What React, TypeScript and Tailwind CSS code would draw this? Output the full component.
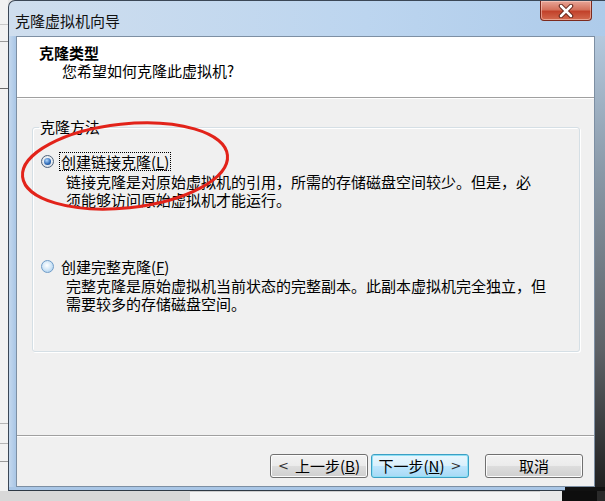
import React from "react";

function Radio({ checked }: { checked: boolean }) {
  return (
    <span
      className={
        "relative inline-flex w-[13px] h-[13px] shrink-0 items-center justify-center rounded-full border " +
        (checked
          ? "border-[#4e627a] bg-[radial-gradient(circle_at_50%_40%,#ffffff,#cfd8e2)]"
          : "border-[#6f9cc8] bg-[radial-gradient(circle_at_45%_40%,#ffffff_0%,#d6e9f8_45%,#9cc5ea_100%)]")
      }
    >
      {checked && (
        <span className="w-[7px] h-[7px] rounded-full bg-[radial-gradient(circle_at_40%_35%,#b0d8ff,#2a66b3_60%,#0f3c7a)]" />
      )}
    </span>
  );
}

function Button({ children, primary }: { children: React.ReactNode; primary?: boolean }) {
  return (
    <div
      className={
        "w-[98px] h-[24px] flex items-center justify-center rounded-[3px] border text-[15px] leading-[18px] " +
        (primary
          ? "border-[#3c9fc4] bg-[linear-gradient(to_bottom,#eaf6fd_0%,#d9f0fc_50%,#bee6fd_51%,#a7d9f5_100%)] shadow-[inset_0_0_0_1px_#8ee0f5]"
          : "border-[#707070] bg-[linear-gradient(to_bottom,#f2f2f2_0%,#ebebeb_50%,#dddddd_51%,#cfcfcf_100%)] shadow-[inset_0_0_0_1px_#fcfcfc]")
      }
    >
      {children}
    </div>
  );
}

export default function App() {
  return (
    <div className="relative w-[605px] h-[501px] overflow-hidden bg-[#e6e6e6] flex flex-col font-['Noto_Sans_CJK_SC','Noto_Sans',sans-serif] text-black">
      <div className="flex h-[491px]">
        {/* desktop strip at left */}
        <div className="w-[8px] flex flex-col bg-[#f2f2f2]">
          <div className="h-[24px]" />
          <div className="h-px bg-[#c9c9c9]" />
          <div className="h-[16px]" />
          <div className="h-px bg-[#9a9a9a]" />
          <div className="h-[46px]" />
          <div className="h-px bg-[#6a6a6a]" />
          <div className="h-[334px]" />
          <div className="h-px bg-[#b5b5b5]" />
          <div className="h-[19px]" />
          <div className="h-px bg-[#b5b5b5]" />
          <div className="h-[17px]" />
          <div className="h-px bg-[#9a9a9a]" />
        </div>

        {/* window */}
        <div className="flex-1 flex flex-col rounded-tl-[7px] border-l border-t border-[#3b4756] bg-[linear-gradient(to_right,#cfdeee,#bcd5ef_60%,#aecbea)]">
          {/* title bar */}
          <div className="h-[35px] flex items-start">
            <div className="pl-[6px] mt-[11px] text-[15px] leading-[18px] text-[#111]">克隆虚拟机向导</div>
            <div className="ml-auto mr-[13px] w-[52px] h-[20px] rounded-b-[4px] border border-t-0 border-[#7c2a1e] bg-[linear-gradient(to_bottom,#e8a597_0%,#d4725d_45%,#c2422b_55%,#d36a4f_100%)] shadow-[inset_0_0_0_1px_rgba(255,220,210,0.5)] flex items-center justify-center">
              <svg width="16" height="14" viewBox="0 0 16 14">
                <path d="M3 2 L13 12 M13 2 L3 12" stroke="#5a1d12" strokeWidth="4.5" strokeLinecap="round" />
                <path d="M3 2 L13 12 M13 2 L3 12" stroke="#ffffff" strokeWidth="2.6" strokeLinecap="round" />
              </svg>
            </div>
          </div>

          <div className="flex flex-1">
            <div className="w-[7px] bg-[linear-gradient(to_right,#c4d8ee,#a9c6e6)]" />

            {/* client */}
            <div className="w-[579px] flex flex-col border border-[#7d8fa3] bg-[#f0f0f0]">
              {/* header */}
              <div className="h-[61px] shrink-0 bg-white border-b border-[#a0a0a0] pt-[7px]">
                <div className="pl-[22px] text-[15px] leading-[18px] font-bold">克隆类型</div>
                <div className="pl-[45px] text-[15px] leading-[18px]">您希望如何克隆此虚拟机?</div>
              </div>

              {/* body */}
              <div className="flex-1 border-t border-white">
                <fieldset className="ml-[15px] mt-[19px] w-[548px] border border-[#d5dfe5] rounded-[3px] shadow-[1px_1px_0_#ffffff,inset_1px_1px_0_#ffffff] pb-[38px]">
                  <legend className="ml-[6px] px-[1px] text-[15px] leading-[18px]">克隆方法</legend>
                  <div className="flex items-center h-[20px] mt-[15px] pl-[8px]">
                    <Radio checked />
                    <span className="ml-[5px] px-[1px] border border-dotted border-black text-[15px] leading-[17px]">
                      创建链接克隆(<span className="underline">L</span>)
                    </span>
                  </div>
                  <div className="pl-[33px] mt-[2px] text-[15px] leading-[18px]">
                    <div>链接克隆是对原始虚拟机的引用，所需的存储磁盘空间较少。但是，必</div>
                    <div>须能够访问原始虚拟机才能运行。</div>
                  </div>
                  <div className="flex items-center h-[20px] mt-[47px] pl-[8px]">
                    <Radio checked={false} />
                    <span className="ml-[5px] px-[1px] border border-transparent text-[15px] leading-[17px]">
                      创建完整克隆(<span className="underline">F</span>)
                    </span>
                  </div>
                  <div className="pl-[33px] mt-[1px] text-[15px] leading-[18px]">
                    <div>完整克隆是原始虚拟机当前状态的完整副本。此副本虚拟机完全独立，但</div>
                    <div>需要较多的存储磁盘空间。</div>
                  </div>
                </fieldset>
              </div>

              {/* footer */}
              <div className="h-[51px] shrink-0 border-t border-[#a0a0a0] shadow-[inset_0_1px_0_#ffffff] flex items-start justify-end pt-[18px] pr-[11px]">
                <div className="flex">
                  <Button>
                    <span className="mr-[6px] font-['DejaVu_Sans',sans-serif] text-[13px] text-[#333]">&lt;</span>
                    上一步(<span className="underline">B</span>)
                  </Button>
                  <div className="w-[3px]" />
                  <Button primary>
                    下一步(<span className="underline">N</span>)
                    <span className="ml-[6px] font-['DejaVu_Sans',sans-serif] text-[13px] text-[#333]">&gt;</span>
                  </Button>
                  <div className="w-[16px]" />
                  <Button>取消</Button>
                </div>
              </div>
            </div>

            {/* right frame */}
            <div className="flex-1 bg-[linear-gradient(to_bottom,#b4c9de_0%,#8a99a8_30%,#5d6166_70%,#202020_100%)]" />
          </div>

          {/* bottom frame */}
          <div className="h-[4px] flex">
            <div className="flex-1 bg-[#a9c6e6] border-b border-[#2f3a45]" />
            <div className="w-[40px] bg-[#111]" />
          </div>
        </div>
      </div>

      {/* desktop strip at bottom */}
      <div className="flex-1 flex">
        <div className="w-[190px] bg-[#d8d8d8]" />
        <div className="w-[350px] bg-[#f4f4f4] border-t border-[#cfcfcf]" />
        <div className="w-[22px] bg-[#e8e8e8]" />
        <div className="w-[35px] bg-[#0e0e0e]" />
        <div className="flex-1 bg-[#2a2a2a]" />
      </div>

      {/* red annotation ellipse */}
      <svg className="absolute left-0 top-0 pointer-events-none" width="605" height="501">
        <ellipse
          cx="125"
          cy="166"
          rx="103"
          ry="42"
          transform="rotate(-6 125 166)"
          fill="none"
          stroke="#e2231a"
          strokeWidth="3"
        />
      </svg>
    </div>
  );
}
